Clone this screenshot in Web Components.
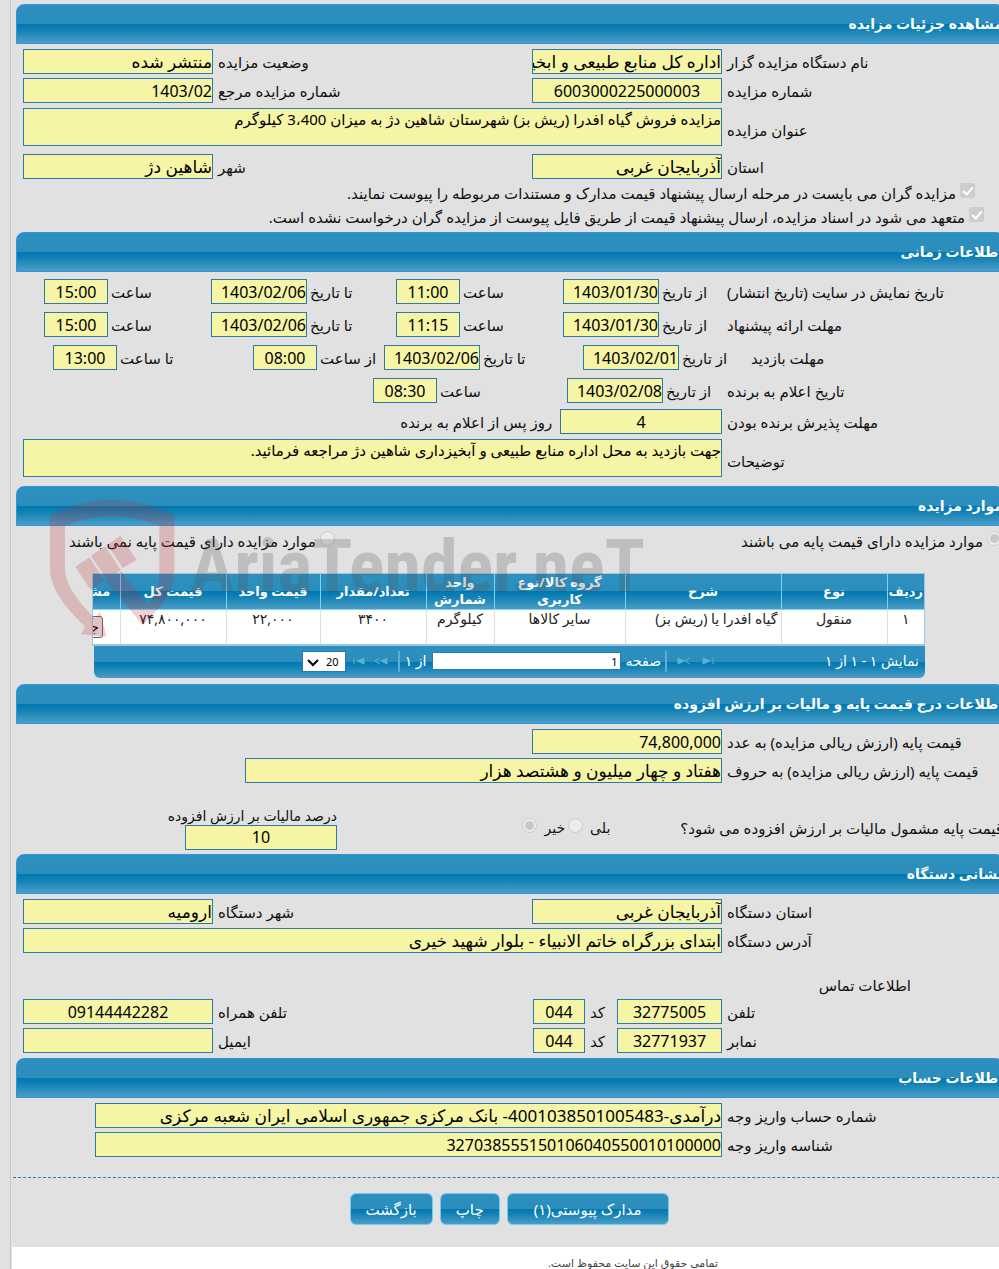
<!DOCTYPE html>
<html lang="fa" dir="rtl">
<head>
<meta charset="utf-8">
<title>مشاهده جزئیات مزایده</title>
<style>
  body {
    margin: 0;
    background: #e1e1e1;
    color: #111;
    font: 15px/18px "Noto Sans", "DejaVu Sans", sans-serif;
    overflow-x: hidden;
  }
  .base-choice {
    display: flex;
    justify-content: space-between;
    height: 24px;
    padding: 0 5px 0 46px;
    margin-bottom: 20px;
  }
  .tax {
    display: flex;
    align-items: center;
    gap: 3px;
    height: 46px;
    margin-top: 20px;
    padding-right: 4px;
    font-size: 14px;
  }
  .question {
    flex: none;
    margin-left: 67px;
    font-size: 15px;
    white-space: nowrap;
  }
  .contact {
    margin-top: 18px;
    padding-right: 96px;
    line-height: 24px;
  }
</style>
</head>
<body>
<tender-page>
  <section-panel heading="مشاهده جزئیات مزایده">
    <form-row>
      <labelled-field class="main" label="نام دستگاه مزایده گزار" value="اداره کل منابع طبیعی و ابخیزداری"></labelled-field>
      <labelled-field class="side" label="وضعیت مزایده" value="منتشر شده"></labelled-field>
    </form-row>
    <form-row>
      <labelled-field class="main center" label="شماره مزایده" value="6003000225000003"></labelled-field>
      <labelled-field class="side" label="شماره مزایده مرجع" value="1403/02"></labelled-field>
    </form-row>
    <form-row class="tall">
      <labelled-field class="wide" multiline label="عنوان مزایده" value="مزایده فروش گیاه افدرا (ریش بز) شهرستان شاهین دژ به میزان 3،400 کیلوگرم"></labelled-field>
    </form-row>
    <form-row>
      <labelled-field class="main" label="استان" value="آذربایجان غربی"></labelled-field>
      <labelled-field class="side" label="شهر" value="شاهین دژ"></labelled-field>
    </form-row>
    <choice-item class="line" type="checkbox" checked style="--indent: 32px">مزایده گران می بایست در مرحله ارسال پیشنهاد قیمت مدارک و مستندات مربوطه را پیوست نمایند.</choice-item>
    <choice-item class="line" type="checkbox" checked style="--indent: 23px">متعهد می شود در اسناد مزایده، ارسال پیشنهاد قیمت از طریق فایل پیوست از مزایده گران درخواست نشده است.</choice-item>
  </section-panel>

  <section-panel heading="اطلاعات زمانی">
    <time-row label="تاریخ نمایش در سایت (تاریخ انتشار)" columns="280px 164px 167px 185px 167px">
      <labelled-field class="date" label="از تاریخ" value="1403/01/30"></labelled-field>
      <labelled-field class="hour" label="ساعت" value="11:00"></labelled-field>
      <labelled-field class="date" label="تا تاریخ" value="1403/02/06"></labelled-field>
      <labelled-field class="hour" label="ساعت" value="15:00"></labelled-field>
    </time-row>
    <time-row label="مهلت ارائه پیشنهاد" columns="280px 164px 167px 185px 167px">
      <labelled-field class="date" label="از تاریخ" value="1403/01/30"></labelled-field>
      <labelled-field class="hour" label="ساعت" value="11:15"></labelled-field>
      <labelled-field class="date" label="تا تاریخ" value="1403/02/06"></labelled-field>
      <labelled-field class="hour" label="ساعت" value="15:00"></labelled-field>
    </time-row>
    <time-row label="مهلت بازدید" columns="256px 168px 199px 131px 200px">
      <labelled-field class="date" label="از تاریخ" value="1403/02/01"></labelled-field>
      <labelled-field class="date" label="تا تاریخ" value="1403/02/06"></labelled-field>
      <labelled-field class="hour" label="از ساعت" value="08:00"></labelled-field>
      <labelled-field class="hour" label="تا ساعت" value="13:00"></labelled-field>
    </time-row>
    <time-row label="تاریخ اعلام به برنده" columns="280px 160px 194px">
      <labelled-field class="date" label="از تاریخ" value="1403/02/08"></labelled-field>
      <labelled-field class="hour" label="ساعت" value="08:30"></labelled-field>
    </time-row>
    <form-row>
      <labelled-field class="main center" style="--field: 162px" label="مهلت پذیرش برنده بودن" value="4"></labelled-field>
      <span>&nbsp; روز پس از اعلام به برنده</span>
    </form-row>
    <form-row class="tall">
      <labelled-field class="wide" multiline label="توضیحات" value="جهت بازدید به محل اداره منابع طبیعی و آبخیزداری شاهین دژ مراجعه فرمائید."></labelled-field>
    </form-row>
  </section-panel>

  <section-panel heading="موارد مزایده">
    <div class="base-choice">
      <choice-item type="radio" checked>موارد مزایده دارای قیمت پایه می باشند</choice-item>
      <choice-item type="radio">موارد مزایده دارای قیمت پایه نمی باشند</choice-item>
    </div>
    <item-grid></item-grid>
    <site-watermark></site-watermark>
  </section-panel>

  <section-panel heading="اطلاعات درج قیمت پایه و مالیات بر ارزش افزوده">
    <form-row>
      <labelled-field class="main" label="قیمت پایه (ارزش ریالی مزایده) به عدد" value="74,800,000"></labelled-field>
    </form-row>
    <form-row>
      <labelled-field class="main" style="--field: 477px" label="قیمت پایه (ارزش ریالی مزایده) به حروف" value="هفتاد و چهار میلیون و هشتصد هزار"></labelled-field>
    </form-row>
    <div class="tax">
      <span class="question">قیمت پایه مشمول مالیات بر ارزش افزوده می شود؟</span>
      <choice-item type="radio" after>بلی</choice-item>
      <choice-item type="radio" after checked>خیر</choice-item>
      <labelled-field class="stacked center" label="درصد مالیات بر ارزش افزوده" value="10"></labelled-field>
    </div>
  </section-panel>

  <section-panel heading="نشانی دستگاه">
    <form-row>
      <labelled-field class="main" label="استان دستگاه" value="آذربایجان غربی"></labelled-field>
      <labelled-field class="side" label="شهر دستگاه" value="ارومیه"></labelled-field>
    </form-row>
    <form-row>
      <labelled-field class="wide" label="آدرس دستگاه" value="ابتدای بزرگراه خاتم الانبیاء - بلوار شهید خیری"></labelled-field>
    </form-row>
    <div class="contact">اطلاعات تماس</div>
    <form-row>
      <labelled-field class="main center" style="--field: 105px" label="تلفن" value="32775005"></labelled-field>
      <labelled-field class="code center" label="کد" value="044"></labelled-field>
      <labelled-field class="side center" label="تلفن همراه" value="09144442282"></labelled-field>
    </form-row>
    <form-row>
      <labelled-field class="main center" style="--field: 105px" label="نمابر" value="32771937"></labelled-field>
      <labelled-field class="code center" label="کد" value="044"></labelled-field>
      <labelled-field class="side center" label="ایمیل" value=""></labelled-field>
    </form-row>
  </section-panel>

  <section-panel heading="اطلاعات حساب">
    <form-row>
      <labelled-field class="main" style="--field: 627px" label="شماره حساب واریز وجه" value="درآمدی-4001038501005483- بانک مرکزی جمهوری اسلامی ایران شعبه مرکزی"></labelled-field>
    </form-row>
    <form-row>
      <labelled-field class="main" style="--field: 627px" label="شناسه واریز وجه" value="327038555150106040550010100000"></labelled-field>
    </form-row>
  </section-panel>

  <action-bar slot="actions">
    <action-button>مدارک پیوستی(۱)</action-button>
    <action-button>چاپ</action-button>
    <action-button>بازگشت</action-button>
  </action-bar>
  <span slot="footer">تمامی حقوق این سایت محفوظ است.</span>
</tender-page>

<script>
const glossy = 'linear-gradient(#2e90bf, #2b8dbc 50%, #0078b0 50%, #0a7db3 60%, #4a9dc4)';

class TenderPage extends HTMLElement {
  constructor() {
    super();
    this.attachShadow({ mode: 'open' });
    this.shadowRoot.innerHTML = `
      <style>
        :host { display: block; overflow: hidden; }
        main {
          margin: 0 -8px 0 10px;
          padding-top: 4px;
          border-left: 1px solid #c6c6c6;
        }
        footer {
          height: 22px;
          margin-left: 1px;
          padding: 8px 289px 0 0;
          background: #fff;
          color: #444;
          font-size: 11px;
          line-height: 16px;
          overflow: hidden;
          box-sizing: border-box;
        }
      </style>
      <main>
        <slot></slot>
        <slot name="actions"></slot>
        <footer><slot name="footer"></slot></footer>
      </main>
    `;
  }
}

class SectionPanel extends HTMLElement {
  constructor() {
    super();
    this.attachShadow({ mode: 'open' });
    this.shadowRoot.innerHTML = `
      <style>
        :host { display: block; position: relative; }
        h2 {
          height: 40px;
          margin: 0 3px 0 5px;
          box-sizing: border-box;
          border: 1px solid #2f95e3;
          border-radius: 8px 8px 0 0;
          background: ${glossy};
          color: #fff;
          font-size: 14px;
          line-height: 38px;
          white-space: nowrap;
        }
        .content { padding: 3px 0 3px 12px; }
      </style>
      <h2></h2>
      <div class="content"><slot></slot></div>
    `;
    this.shadowRoot.querySelector('h2').innerText = this.getAttribute('heading');
  }
}

class FormRow extends HTMLElement {
  constructor() {
    super();
    this.attachShadow({ mode: 'open' });
    this.shadowRoot.innerHTML = `
      <style>
        :host { display: flex; align-items: center; height: 29px; white-space: nowrap; }
        :host(.tall) { height: 44px; margin-bottom: 3px; }
      </style>
      <slot></slot>
    `;
  }
}

class TimeRow extends HTMLElement {
  constructor() {
    super();
    this.attachShadow({ mode: 'open' });
    this.shadowRoot.innerHTML = `
      <style>
        :host { display: grid; align-items: center; height: 33px; white-space: nowrap; }
        span { text-align: end; }
      </style>
      <span></span>
      <slot></slot>
    `;
    this.shadowRoot.querySelector('span').innerText = this.getAttribute('label');
  }

  connectedCallback() {
    this.style.gridTemplateColumns = this.getAttribute('columns');
  }
}

class LabelledField extends HTMLElement {
  constructor() {
    super();
    this.attachShadow({ mode: 'open' });
    const tag = this.hasAttribute('multiline') ? '<textarea id="field" readonly></textarea>' : '<input id="field" type="text" readonly>';
    this.shadowRoot.innerHTML = `
      <style>
        :host { display: flex; align-items: center; gap: 5px; white-space: nowrap; }
        label { text-align: end; }
        input, textarea {
          flex: none;
          width: var(--field, 190px);
          height: 25px;
          margin: 0;
          padding: 0;
          box-sizing: border-box;
          border: 1px solid #2a7aab;
          border-radius: 0;
          outline: 0;
          background: #f6f4a5;
          color: #000;
          font: 16px "Noto Sans", "DejaVu Sans", sans-serif;
        }
        input.words { font-size: 17px; }
        textarea { height: 38px; resize: none; overflow: hidden; font-size: 15px; line-height: 20px; }
        :host([multiline]) label { padding-top: 6px; }
        :host(.main) label, :host(.wide) label { flex: none; width: 280px; }
        :host(.wide) { flex: 1; }
        :host(.wide) input, :host(.wide) textarea { flex: 1; }
        :host(.side) { flex: 1; }
        :host(.side) label { flex: 1; }
        :host(.center) input { text-align: center; }
        :host(.date), :host(.hour) { justify-content: flex-end; gap: 3px; }
        :host(.date) { --field: 96px; }
        :host(.hour) { --field: 64px; }
        :host(.hour) input { text-align: center; }
        :host(.code) { --field: 52px; padding-right: 12px; }
        :host(.stacked) {
          --field: 152px;
          flex-direction: column;
          align-items: flex-start;
          gap: 0;
          width: 314px;
          margin-right: auto;
        }
      </style>
      <label for="field"></label>
      ${tag}
    `;
    const value = this.getAttribute('value');
    const field = this.shadowRoot.querySelector('#field');
    this.shadowRoot.querySelector('label').innerText = this.getAttribute('label');
    field.value = value;
    // Persian letters are set a little larger than plain numbers
    field.classList.toggle('words', /[آ-ی]/.test(value));
  }
}

class ChoiceItem extends HTMLElement {
  constructor() {
    super();
    this.attachShadow({ mode: 'open' });
    this.shadowRoot.innerHTML = `
      <style>
        :host { display: flex; align-items: center; white-space: nowrap; }
        :host(.line) { height: 24px; padding-right: var(--indent); }
        label { display: flex; align-items: center; gap: 4px; }
        :host([after]) label { flex-direction: row-reverse; gap: 7px; }
        input {
          appearance: none;
          flex: none;
          display: grid;
          place-items: center;
          width: 15px;
          height: 15px;
          margin: 0 0 5px;
          box-sizing: border-box;
        }
        input[type=checkbox] { border-radius: 2px; background: #cdcdcd; }
        input[type=checkbox]:checked::before {
          content: "";
          width: 4px;
          height: 8px;
          margin-bottom: 2px;
          border: solid #fff;
          border-width: 0 2px 2px 0;
          transform: rotate(40deg);
        }
        input[type=radio] { border: 1px solid #cacaca; border-radius: 50%; background: #ececec; }
        input[type=radio]:checked::before {
          content: "";
          width: 9px;
          height: 9px;
          border-radius: 50%;
          background: #c8c8c8;
        }
      </style>
      <label><input type="${this.getAttribute('type')}" disabled><span><slot></slot></span></label>
    `;
    this.shadowRoot.querySelector('input').checked = this.hasAttribute('checked');
  }
}

class ItemGrid extends HTMLElement {
  constructor() {
    super();
    this.attachShadow({ mode: 'open' });
    this.shadowRoot.innerHTML = `
      <style>
        :host { display: block; margin: 0 82px 3px 69px; }
        .view { overflow: hidden; border: 1px solid #9cc9e2; border-width: 1px 1px 2px; box-sizing: border-box; height: 73px; }
        table { width: 911px; table-layout: fixed; border-collapse: collapse; background: #fff; }
        th {
          height: 35px;
          padding: 0;
          border-left: 1px solid #7cd3f5;
          border-bottom: 1px solid #7cd3f5;
          background: ${glossy};
          color: #fff;
          font-size: 13px;
          line-height: 17px;
          box-sizing: border-box;
        }
        td {
          height: 36px;
          padding: 0 3px;
          border-left: 1px solid #ddd;
          text-align: center;
          vertical-align: top;
          font-size: 14px;
          line-height: 18px;
          box-sizing: border-box;
          color: #222;
        }
        td.text { text-align: start; }
        td button {
          width: 73px;
          height: 22px;
          margin: 6px 0 0;
          padding: 0;
          border: 1px solid #666;
          border-radius: 3px;
          background: #efefef;
          font: inherit;
        }
        nav {
          display: flex;
          align-items: center;
          height: 32px;
          margin-left: 2px;
          padding: 0 6px 2px 0;
          box-sizing: border-box;
          border-radius: 0 0 6px 6px;
          background: ${glossy};
          color: #fff;
          font-size: 14px;
        }
        nav svg { width: 13px; height: 8px; margin-right: 12px; fill: #62aed3; stroke: #62aed3; }
        nav svg.first { margin-right: 110px; }
        nav i { width: 2px; height: 21px; margin: 0 10px 0 4px; background: #5fadd2; }
        nav i.end { margin: 0 5px 0 0; }
        nav i.end ~ svg { margin-right: 10px; }
        nav input {
          width: 189px;
          height: 18px;
          margin: 0 5px;
          padding: 0 2px;
          box-sizing: border-box;
          border: 1px solid #2a7aab;
          font: 11px "Noto Sans", sans-serif;
        }
        nav select {
          appearance: none;
          width: 44px;
          height: 21px;
          padding: 0 6px 0 0;
          border: 1px solid #2a7aab;
          border-radius: 0;
          color: #000;
          font: 11px "Noto Sans", sans-serif;
          background: #fff url("data:image/svg+xml,%3Csvg xmlns='http://www.w3.org/2000/svg' width='12' height='8'%3E%3Cpath d='M1 1l5 5 5-5' fill='none' stroke='%23000' stroke-width='2'/%3E%3C/svg%3E") 4px 7px no-repeat;
        }
        .size { margin-right: 6px; display: flex; }
      </style>
      <div class="view">
        <table>
          <colgroup>
            <col style="width: 37px"><col style="width: 106px"><col style="width: 156px">
            <col style="width: 131px"><col style="width: 68px"><col style="width: 106px">
            <col style="width: 94px"><col style="width: 106px"><col>
          </colgroup>
          <thead>
            <tr>
              <th>ردیف</th><th>نوع</th><th>شرح</th><th>گروه کالا/نوع<br>کاربری</th><th>واحد<br>شمارش</th>
              <th>تعداد/مقدار</th><th>قیمت واحد</th><th>قیمت کل</th><th>مشخصات کالا</th>
            </tr>
          </thead>
          <tbody>
            <tr>
              <td>۱</td><td>منقول</td><td class="text">گیاه افدرا یا (ریش بز)</td><td>سایر کالاها</td><td>کیلوگرم</td>
              <td>۳۴۰۰</td><td>۲۲,۰۰۰</td><td>۷۴,۸۰۰,۰۰۰</td><td><button>جزئیات کالا</button></td>
            </tr>
          </tbody>
        </table>
      </div>
      <nav>
        <span>نمایش ۱ - ۱ از ۱</span>
        <svg class="first" viewBox="0 0 13 8"><path d="M1 1l7 3-7 3zM11 1v6" /></svg>
        <svg viewBox="0 0 13 8"><path d="M1 1l6 3-6 3z" /><path d="M13 1L8 4l5 3" fill="none" /></svg>
        <i></i>
        <label for="page">صفحه</label>
        <input id="page" type="text" value="1">
        <span>از ۱</span>
        <i class="end"></i>
        <svg viewBox="0 0 13 8"><path d="M12 1L6 4l6 3z" /><path d="M5 1L0 4l5 3" fill="none" /></svg>
        <svg viewBox="0 0 13 8"><path d="M12 1L5 4l7 3zM2 1v6" /></svg>
        <label class="size"><select aria-label="تعداد در صفحه"><option>20</option></select></label>
      </nav>
    `;
  }
}

class SiteWatermark extends HTMLElement {
  constructor() {
    super();
    this.attachShadow({ mode: 'open' });
    this.shadowRoot.innerHTML = `
      <style>
        :host {
          position: absolute;
          top: 4px;
          left: 29px;
          display: flex;
          direction: ltr;
          pointer-events: none;
        }
        svg { width: 150px; height: 155px; fill: rgba(190, 40, 50, .22); }
        span {
          margin-top: 37px;
          color: rgba(80, 80, 80, .24);
          font: bold 74px/80px "Liberation Sans Narrow", "Roboto Condensed", "Liberation Sans", sans-serif;
        }
      </style>
      <svg viewBox="0 0 450 465">
        <path d="M30 75Q215-15 403 75V240Q400 300 365 345L308 405 195 270 245 245 325 345Q358 300 358 250V108Q215 50 75 108V240Q78 300 165 385L180 365 200 440 123 433 135 410Q30 310 30 240Z" />
        <path d="M106 230l42-28 46 68-42 30zM153 197l42-28 48 72-42 28zM203 164l38-27 49 72-42 25z" />
      </svg>
      <span>AriaTender.neT</span>
    `;
  }
}

class ActionBar extends HTMLElement {
  constructor() {
    super();
    this.attachShadow({ mode: 'open' });
    this.shadowRoot.innerHTML = `
      <style>
        :host {
          display: flex;
          justify-content: center;
          gap: 7px;
          margin: 15px 2px 0;
          padding: 15px 0 22px;
          border-top: 1px dashed #2a7aab;
        }
      </style>
      <slot></slot>
    `;
  }
}

class ActionButton extends HTMLElement {
  constructor() {
    super();
    this.attachShadow({ mode: 'open' });
    this.shadowRoot.innerHTML = `
      <style>
        button {
          height: 32px;
          padding: 0 15px;
          border: 1px solid #6fcdf2;
          border-radius: 6px;
          background: ${glossy};
          color: #fff;
          font: inherit;
          font-size: 15px;
        }
        :host(:first-child) button { padding: 0 26px; }
      </style>
      <button type="button"><slot></slot></button>
    `;
  }
}

window.customElements.define('tender-page', TenderPage);
window.customElements.define('section-panel', SectionPanel);
window.customElements.define('form-row', FormRow);
window.customElements.define('time-row', TimeRow);
window.customElements.define('labelled-field', LabelledField);
window.customElements.define('choice-item', ChoiceItem);
window.customElements.define('item-grid', ItemGrid);
window.customElements.define('site-watermark', SiteWatermark);
window.customElements.define('action-bar', ActionBar);
window.customElements.define('action-button', ActionButton);
</script>
</body>
</html>
